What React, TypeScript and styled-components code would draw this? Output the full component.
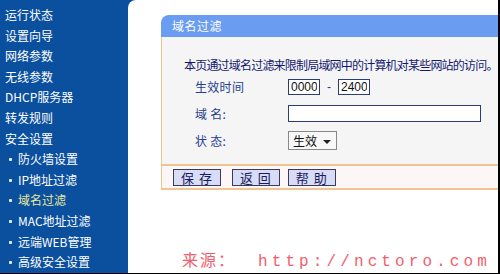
import styled, { createGlobalStyle } from "styled-components";

const GlobalStyle = createGlobalStyle`
  html, body {
    margin: 0;
    padding: 0;
    background: #ffffff;
  }
  body {
    font-family: "Noto Sans CJK SC", "Liberation Sans", sans-serif;
  }
`;

const menu = [
  { label: "运行状态" },
  { label: "设置向导" },
  { label: "网络参数" },
  { label: "无线参数" },
  { label: "DHCP服务器" },
  { label: "转发规则" },
  { label: "安全设置" },
  { label: "防火墙设置", sub: true },
  { label: "IP地址过滤", sub: true },
  { label: "域名过滤", sub: true, active: true },
  { label: "MAC地址过滤", sub: true },
  { label: "远端WEB管理", sub: true },
  { label: "高级安全设置", sub: true },
];

function App() {
  return (
    <>
      <GlobalStyle />
      <Frame>
        <Sidebar>
          {menu.map((m, i) => (
            <MenuItem key={i} $sub={!!m.sub} $active={!!m.active}>
              {m.label}
            </MenuItem>
          ))}
        </Sidebar>
        <Main>
          <Panel>
            <PanelHeader>域名过滤</PanelHeader>
            <PanelBody>
              <Desc>本页通过域名过滤来限制局域网中的计算机对某些网站的访问。</Desc>
              <FormRow>
                <Label>生效时间</Label>
                <TimeInput defaultValue="0000" />
                <Dash>-</Dash>
                <TimeInput defaultValue="2400" />
              </FormRow>
              <FormRow>
                <Label>域&nbsp;名:</Label>
                <DomainInput defaultValue="" />
              </FormRow>
              <FormRow>
                <Label>状&nbsp;态:</Label>
                <SelectBox>
                  生效
                  <Arrow />
                </SelectBox>
              </FormRow>
            </PanelBody>
            <ButtonBar>
              <Btn>保 存</Btn>
              <Btn $gap={11}>返 回</Btn>
              <Btn $gap={8}>帮 助</Btn>
            </ButtonBar>
          </Panel>
          <Watermark>
            来源：<Url>http://nctoro.com</Url>
          </Watermark>
        </Main>
      </Frame>
    </>
  );
}

const Frame = styled.div`
  display: flex;
  width: 500px;
  height: 274px;
  box-sizing: border-box;
  border-right: 2px solid #000;
  border-bottom: 1px solid #000;
  background: #0b4f9f;
  overflow: hidden;
`;

const Sidebar = styled.div`
  width: 128px;
  flex-shrink: 0;
  padding-top: 5px;
  display: flex;
  flex-direction: column;
`;

const MenuItem = styled.div<{ $sub: boolean; $active: boolean }>`
  position: relative;
  height: 20.8px;
  line-height: 20px;
  font-size: 12px;
  white-space: nowrap;
  color: ${(p) => (p.$active ? "#e6ea9c" : "#ffffff")};
  padding-left: ${(p) => (p.$sub ? "18px" : "5px")};
  &::before {
    content: "";
    display: ${(p) => (p.$sub ? "block" : "none")};
    position: absolute;
    left: 9px;
    top: 9px;
    width: 3px;
    height: 3px;
    border-radius: 1px;
    background: #e8eef8;
  }
`;

const Main = styled.div`
  flex: 1;
  min-width: 0;
  background: #ffffff;
  border-top-left-radius: 8px;
  overflow: hidden;
  padding: 15px 0 0 33px;
  display: flex;
  flex-direction: column;
`;

const Panel = styled.div`
  width: 420px;
  flex-shrink: 0;
`;

const PanelHeader = styled.div`
  height: 22px;
  line-height: 22px;
  background: #6a9cf2;
  border-top-left-radius: 8px;
  color: #ffffff;
  font-size: 12px;
  padding-left: 11px;
  letter-spacing: 0.5px;
`;

const PanelBody = styled.div`
  border-left: 1px solid #f0c490;
  border-bottom: 2px solid #f0c490;
  background: #f5f5f5;
  padding: 21px 0 10px 22px;
  display: flex;
  flex-direction: column;
`;

const Desc = styled.div`
  font-size: 12px;
  line-height: 14px;
  color: #121870;
  letter-spacing: -0.8px;
  white-space: nowrap;
  margin-bottom: 1px;
`;

const FormRow = styled.div`
  display: flex;
  align-items: center;
  height: 27px;
  padding-left: 11px;
`;

const Label = styled.span`
  width: 93px;
  font-size: 12px;
  color: #26418f;
  letter-spacing: 0.3px;
`;

const TimeInput = styled.input`
  width: 32px;
  height: 16px;
  box-sizing: border-box;
  border: 1px solid #2c3c78;
  padding: 0 2px;
  font-family: "Liberation Sans", sans-serif;
  font-size: 12px;
  color: #111;
  background: #fff;
  outline: none;
`;

const Dash = styled.span`
  width: 18px;
  text-align: center;
  font-family: "Liberation Sans", sans-serif;
  font-size: 12px;
  color: #26418f;
`;

const DomainInput = styled.input`
  width: 193px;
  height: 17px;
  box-sizing: border-box;
  border: 1px solid #2c3c78;
  background: #fff;
  outline: none;
`;

const SelectBox = styled.div`
  width: 49px;
  height: 19px;
  box-sizing: border-box;
  border: 1px solid #8a8a8a;
  background: #f8f8f8;
  font-size: 12px;
  line-height: 17px;
  color: #111;
  padding-left: 4px;
  display: flex;
  align-items: center;
  gap: 6px;
`;

const Arrow = styled.span`
  width: 0;
  height: 0;
  margin-top: 2px;
  border-left: 4px solid transparent;
  border-right: 4px solid transparent;
  border-top: 4px solid #222;
`;

const ButtonBar = styled.div`
  display: flex;
  align-items: center;
  height: 22px;
  border-left: 1px solid #f0c490;
  border-bottom: 2px solid #f0c490;
  background: #fdf6f6;
  padding-left: 11px;
`;

const Btn = styled.div<{ $gap?: number }>`
  margin-left: ${(p) => p.$gap ?? 0}px;
  height: 17px;
  line-height: 15px;
  box-sizing: border-box;
  padding: 0 7px;
  border: 1px solid #3a3a5a;
  background: #d8dcf6;
  color: #1a1a5c;
  font-size: 13px;
  letter-spacing: 1px;
  white-space: pre;
`;

const Watermark = styled.div`
  margin-top: auto;
  margin-bottom: 2px;
  margin-left: 21px;
  white-space: nowrap;
  font-size: 16px;
  line-height: 17px;
  color: #f0606c;
  letter-spacing: 2px;
`;

const Url = styled.span`
  margin-left: 22px;
  font-family: "Liberation Mono", monospace;
  font-size: 16px;
  letter-spacing: 4.1px;
`;

export default App;
